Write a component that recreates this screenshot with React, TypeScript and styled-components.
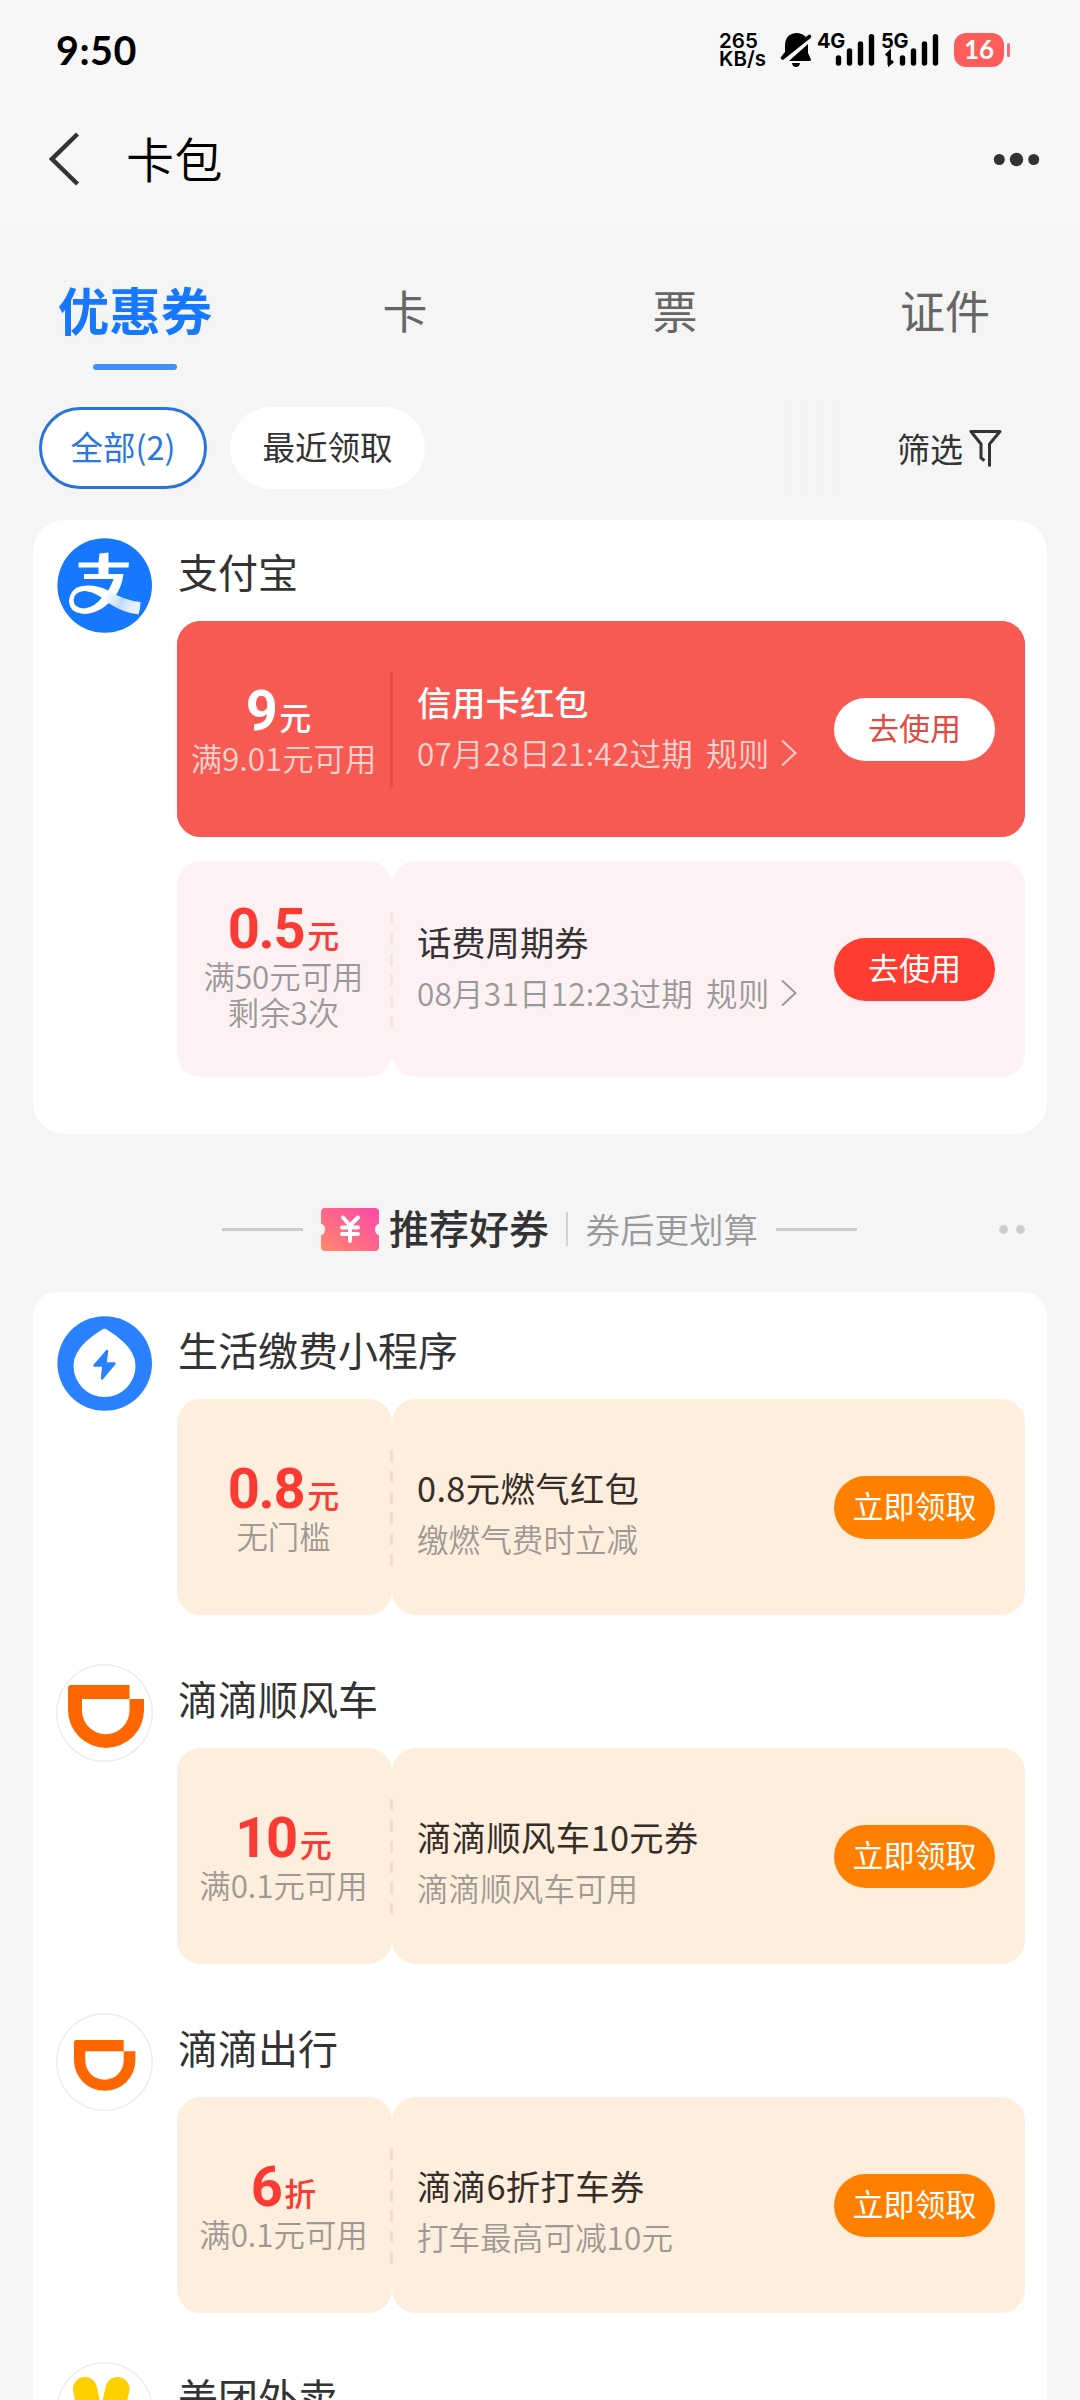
import React from 'react';
import styled, { createGlobalStyle } from 'styled-components';

const cjk = '"Noto Sans CJK SC", "Noto Sans", sans-serif';

const GlobalStyle = createGlobalStyle`
  *, *::before, *::after { box-sizing: border-box; }
  body { margin: 0; background: #f5f5f5; font-family: ${cjk}; }
  button { font-family: inherit; border: 0; padding: 0; margin: 0; }
`;

const Page = styled.div`
  width: 1080px;
  height: 2400px;
  overflow: hidden;
  background: #f5f5f5;
  color: #333;
`;

const Header = styled.header`
  height: 230px;
  background: #f7f7f7;
`;

const StatusBar = styled.div`
  height: 100px;
  display: flex;
  align-items: center;
  padding: 0 70px 0 56px;
`;

const Clock = styled.div`
  font: 700 39.5px/40px Lato, sans-serif;
  letter-spacing: 0.5px;
  color: #000;
  flex: 1;
`;

const NetSpeed = styled.div`
  width: 62px;
  font: 600 20.5px/18.5px Inter, sans-serif;
  color: #000;
`;

const StatusIcon = styled.svg<{ $gap: number }>`
  display: block;
  flex: none;
  overflow: visible;
  margin-right: ${(p) => p.$gap}px;
`;

const Battery = styled.div`
  display: flex;
  align-items: center;
  gap: 3px;
`;

const BatteryBody = styled.div`
  width: 50px;
  height: 34px;
  border-radius: 12px;
  background: #ff5c5c;
  color: #fff;
  text-align: center;
  font: 700 26px/33px Lato, sans-serif;
`;

const BatteryCap = styled.div`
  width: 3px;
  height: 14px;
  border-radius: 2px;
  background: #f0707a;
`;

const NavBar = styled.nav`
  height: 118px;
  display: flex;
  align-items: center;
  padding: 0 40px 0 48px;
`;

const NavTitle = styled.h1`
  margin: -4px auto 0 46px;
  font-size: 48px;
  font-weight: 350;
  line-height: 64px;
  letter-spacing: 0.5px;
  color: #000;
`;

const Tabs = styled.div`
  display: grid;
  grid-template-columns: repeat(4, 1fr);
  height: 140px;
  padding-top: 47px;
`;

const Tab = styled.div<{ $active?: boolean }>`
  display: flex;
  flex-direction: column;
  align-items: center;
  gap: 23px;
  line-height: ${(p) => (p.$active ? 64 : 66)}px;
  font-size: ${(p) => (p.$active ? 51.5 : 45)}px;
  font-weight: ${(p) => (p.$active ? 700 : 400)};
  color: ${(p) => (p.$active ? '#1677ff' : '#666')};
`;

const TabLine = styled.div`
  width: 84px;
  height: 6px;
  border-radius: 3px;
  background: #4590f8;
`;

const Filters = styled.div`
  display: flex;
  align-items: center;
  height: 82px;
  margin-top: 37px;
  padding: 0 78px 0 39px;
`;

const Chip = styled.div<{ $active?: boolean }>`
  width: ${(p) => (p.$active ? 168 : 195)}px;
  height: 82px;
  margin-right: 23px;
  border-radius: 41px;
  border: ${(p) => (p.$active ? '3px solid #2a73dd' : '0 solid transparent')};
  background: #fff;
  color: ${(p) => (p.$active ? '#2a76e2' : '#333')};
  font-size: 32.5px;
  line-height: ${(p) => (p.$active ? 72 : 78)}px;
  text-align: center;
  white-space: nowrap;
`;

const FadeStripes = styled.div`
  width: 55px;
  height: 82px;
  margin-left: auto;
  background: repeating-linear-gradient(90deg, #f3f3f3 0 8px, #f6f6f6 8px 15px);
  opacity: 0.6;
`;

const FilterButton = styled.div`
  display: flex;
  align-items: center;
  gap: 6px;
  margin-left: 57px;
  font-size: 33px;
  line-height: 78px;
  color: #333;
`;

const Card = styled.section<{ $top: number; $radius: number }>`
  width: 1014px;
  margin: 0 auto;
  padding: ${(p) => p.$top}px 22px 0 23px;
  border-radius: ${(p) => p.$radius}px;
  background: #fff;
`;

const WalletCard = styled(Card)`
  margin-top: 31px;
  height: 614px;
`;

const Merchant = styled.div`
  display: flex;
  gap: 24px;
  padding-bottom: 49px;
`;

const Avatar = styled.div<{ $ring?: boolean }>`
  flex: none;
  width: 97px;
  height: 98px;
  border-radius: 50%;
  box-shadow: ${(p) => (p.$ring ? 'inset 0 0 0 1.5px #ececee' : 'none')};
  svg { display: block; }
`;

const MerchantBody = styled.div`
  width: 848px;
`;

const MerchantName = styled.h2`
  margin: 0;
  height: 84px;
  padding-left: 1px;
  font-size: 40px;
  font-weight: 400;
  line-height: 68px;
  color: #333;
`;

const CouponList = styled.div`
  display: flex;
  flex-direction: column;
  gap: 24px;
`;

type Tone = 'red' | 'pink' | 'cream';

const tones = {
  red: { bg: '#f75a53', main: '#fff', title: '#fff', sub: '#ffd3cd', btn: '#fff', btnText: '#df4a42' },
  pink: { bg: '#fef1f3', main: '#fb3a33', title: '#333', sub: '#999', btn: '#fe3b2f', btnText: '#fff' },
  cream: { bg: '#feeedd', main: '#fb3a33', title: '#352d28', sub: '#9f9994', btn: '#ff8000', btnText: '#fff' },
};

const Coupon = styled.div<{ $tone: Tone }>`
  display: flex;
  width: 848px;
  height: 216px;
  border-radius: 24px;
  background: ${(p) => (p.$tone === 'red' ? tones.red.bg : 'transparent')};
`;

const Stub = styled.div<{ $tone: Tone; $double: boolean }>`
  position: relative;
  width: 215px;
  padding-top: ${(p) => (p.$double ? 40 : 62)}px;
  border-radius: 24px;
  background: ${(p) => tones[p.$tone].bg};
  text-align: center;
`;

const Perforation = styled.div<{ $tone: Tone }>`
  position: absolute;
  right: -1px;
  top: 51px;
  width: 3px;
  height: 116px;
  background: ${(p) =>
    p.$tone === 'red'
      ? '#ea4c45'
      : `repeating-linear-gradient(180deg, ${p.$tone === 'pink' ? '#fde0e3' : '#fbd8cd'} 0 12px, transparent 12px 20.8px)`};
`;

const Amount = styled.div<{ $tone: Tone }>`
  display: flex;
  justify-content: center;
  align-items: baseline;
  gap: 3px;
  height: 50px;
  padding-right: ${(p) => (p.$tone === 'red' ? 12 : 2)}px;
  line-height: 56px;
  color: ${(p) => tones[p.$tone].main};
`;

const Value = styled.span`
  font-family: Roboto, sans-serif;
  font-size: 56px;
  font-weight: 700;
  letter-spacing: -1.4px;
`;

const Unit = styled.span`
  font-size: 32px;
  font-weight: 500;
`;

const Conditions = styled.div<{ $tone: Tone }>`
  margin-top: 7px;
  padding-right: 2px;
  font-size: 31.4px;
  font-weight: 350;
  line-height: 36px;
  white-space: nowrap;
  color: ${(p) => tones[p.$tone].sub};
`;

const Detail = styled.div<{ $tone: Tone }>`
  flex: 1;
  display: flex;
  align-items: center;
  padding: 0 30px 0 25px;
  border-radius: 24px;
  background: ${(p) => tones[p.$tone].bg};
`;

const DetailText = styled.div<{ $tone: Tone }>`
  flex: 1;
  align-self: flex-start;
  padding-top: ${(p) => (p.$tone === 'cream' ? 66 : 58)}px;
  white-space: nowrap;
`;

const CouponTitle = styled.div<{ $tone: Tone }>`
  font-size: 34.3px;
  font-weight: ${(p) => (p.$tone === 'red' ? 500 : 400)};
  line-height: 44px;
  letter-spacing: ${(p) => (p.$tone === 'cream' ? 0.4 : 0)}px;
  color: ${(p) => tones[p.$tone].title};
`;

const CouponSub = styled.div<{ $tone: Tone }>`
  display: flex;
  align-items: center;
  margin-top: 9px;
  font-size: 31.5px;
  font-weight: 350;
  line-height: 40px;
  letter-spacing: ${(p) => (p.$tone === 'cream' ? 0.1 : 0.25)}px;
  color: ${(p) => tones[p.$tone].sub};
  svg { margin: 2px 0 0 10px; }
`;

const Rules = styled.span`
  margin-left: 13px;
`;

const Action = styled.button<{ $tone: Tone }>`
  width: 161px;
  height: 63px;
  border-radius: 32px;
  background: ${(p) => tones[p.$tone].btn};
  color: ${(p) => tones[p.$tone].btnText};
  font-size: 31px;
  line-height: 58px;
  padding-bottom: 5px;
  white-space: nowrap;
`;

const SectionHeader = styled.div`
  display: flex;
  align-items: center;
  height: 158px;
  padding: 32px 54px 0 222px;
`;

const Rule = styled.div`
  width: 81px;
  height: 3px;
  background: #cbcbcb;
`;

const TicketIcon = styled.svg`
  display: block;
  margin: 0 10px 0 18px;
`;

const SectionTitle = styled.div`
  font-size: 40px;
  font-weight: 500;
  line-height: 44px;
  margin-bottom: 4px;
  color: #333;
`;

const SectionDivider = styled.div`
  width: 1.5px;
  height: 34px;
  margin: 0 18px 0 17px;
  background: #d4d4d4;
`;

const SectionNote = styled.div`
  font-size: 34.5px;
  font-weight: 350;
  line-height: 44px;
  margin: 0 18px 3px 0;
  color: #999;
`;

const PagerDots = styled.svg`
  display: block;
  margin-left: auto;
`;

const Signal = ({ label, arrow, gap }: { label: string; arrow?: boolean; gap: number }) => (
  <StatusIcon $gap={gap} width="57" height="36" viewBox="0 0 57 36">
    <text x="-1" y="16" fontFamily="Inter, sans-serif" fontWeight="700" fontSize="20" letterSpacing="-0.3">{label}</text>
    {arrow && <path d="M5 23.5L8.5 20V32L12 29M8 21V33" stroke="#000" strokeWidth="3" fill="none" transform="translate(-1 0)" />}
    <g stroke="#000" strokeWidth="5.4" strokeLinecap="round">
      <path d="M20.5 26V31M31.5 19V31M42.5 12V31M53.5 4.7V31" />
    </g>
  </StatusIcon>
);

const AlipayLogo = () => (
  <svg width="97" height="97" viewBox="0 0 97 97">
    <defs>
      <linearGradient id="tail" x1="0" y1="0" x2="1" y2="0.3">
        <stop offset="0.5" stopColor="#fff" />
        <stop offset="0.8" stopColor="#c3dbff" />
        <stop offset="1" stopColor="#e6f0ff" />
      </linearGradient>
    </defs>
    <circle cx="48.7" cy="48.5" r="47.3" fill="#1677ff" />
    <path d="M43.500 16.500L52.500 15.500V25.500H73L72.500 30.500H52.500V37H67.500Q65.500 52 58 60.500Q46 75.500 29 77Q13 76 13 63.500Q15 50 27 49Q38 48 50 54L57.500 42H28V37H42.500V30.500H22.500V25.500H42.500Z" fill="#fff" />
    <path d="M28 42H57.500Q55.500 48 52 54Q40 47 28 47Z" fill="#1677ff" />
    <path d="M47.500 58.500Q37 54 28 54Q18 55 17.500 63Q18 71 28 71.500Q39 70.500 47.500 58.500Z" fill="#1677ff" />
    <path d="M20 52Q32 45 49 52Q68 63.500 84.500 65Q84.500 72 82.500 77.500Q68 76 54 67Q42 56 30 54Z" fill="url(#tail)" />
  </svg>
);

const UtilityLogo = () => (
  <svg width="97" height="97" viewBox="0 0 97 97">
    <circle cx="48.700" cy="48.500" r="47.300" fill="#2a81ff" />
    <path d="M45.500 15Q48.500 12.500 51.500 15Q60 20 67 26.500Q79.500 38 79.500 51A31 31 0 0 1 17.500 51Q17.500 38 30 26.500Q37 20 45.500 15Z" fill="#fff" />
    <path d="M51 36L38.500 50.500H47.500L46 63.500L58.500 48.500H49.500Z" fill="#2a81ff" stroke="#2a81ff" strokeWidth="2.500" strokeLinejoin="round" />
  </svg>
);

const DidiLogo = ({ small }: { small?: boolean }) => (
  <svg width="97" height="97" viewBox="0 0 97 97">
    <path
      transform={small ? 'translate(8.3 10) scale(0.808)' : undefined}
      fill="#ff6600"
      fillRule="evenodd"
      d="M12 24Q12 21 15 21H73.500V35H88V46A38 38 0 0 1 12 46ZM26 35H73.500V46.500A23.750 23.750 0 0 1 26 46.500Z"
    />
  </svg>
);

const MeituanLogo = () => (
  <svg width="97" height="97" viewBox="0 0 97 97">
    <g stroke="#ffd000" strokeWidth="24" strokeLinecap="round">
      <path d="M29 27L36 60M61.500 27L54 60" />
    </g>
  </svg>
);

const Chevron = ({ color }: { color: string }) => (
  <svg width="18" height="28" viewBox="0 0 18 28">
    <path d="M2 1.500L15.500 14L2 26.500" fill="none" stroke={color} strokeWidth="2" />
  </svg>
);

interface CouponData {
  tone: Tone;
  value: string;
  unit: string;
  conditions: string[];
  title: string;
  sub: string;
  rules?: boolean;
  action: string;
}

interface MerchantData {
  name: string;
  logo: React.ReactNode;
  ring?: boolean;
  coupons: CouponData[];
}

const wallet: MerchantData = {
  name: '支付宝',
  logo: <AlipayLogo />,
  coupons: [
    { tone: 'red', value: '9', unit: '元', conditions: ['满9.01元可用'], title: '信用卡红包', sub: '07月28日21:42过期', rules: true, action: '去使用' },
    { tone: 'pink', value: '0.5', unit: '元', conditions: ['满50元可用', '剩余3次'], title: '话费周期券', sub: '08月31日12:23过期', rules: true, action: '去使用' },
  ],
};

const recommended: MerchantData[] = [
  {
    name: '生活缴费小程序',
    logo: <UtilityLogo />,
    coupons: [{ tone: 'cream', value: '0.8', unit: '元', conditions: ['无门槛'], title: '0.8元燃气红包', sub: '缴燃气费时立减', action: '立即领取' }],
  },
  {
    name: '滴滴顺风车',
    logo: <DidiLogo />,
    ring: true,
    coupons: [{ tone: 'cream', value: '10', unit: '元', conditions: ['满0.1元可用'], title: '滴滴顺风车10元券', sub: '滴滴顺风车可用', action: '立即领取' }],
  },
  {
    name: '滴滴出行',
    logo: <DidiLogo small />,
    ring: true,
    coupons: [{ tone: 'cream', value: '6', unit: '折', conditions: ['满0.1元可用'], title: '滴滴6折打车券', sub: '打车最高可减10元', action: '立即领取' }],
  },
  { name: '美团外卖', logo: <MeituanLogo />, ring: true, coupons: [] },
];

const CouponCard = ({ data }: { data: CouponData }) => (
  <Coupon $tone={data.tone}>
    <Stub $tone={data.tone} $double={data.conditions.length > 1}>
      <Amount $tone={data.tone}>
        <Value>{data.value}</Value>
        <Unit>{data.unit}</Unit>
      </Amount>
      <Conditions $tone={data.tone}>
        {data.conditions.map((c) => (
          <div key={c}>{c}</div>
        ))}
      </Conditions>
      <Perforation $tone={data.tone} />
    </Stub>
    <Detail $tone={data.tone}>
      <DetailText $tone={data.tone}>
        <CouponTitle $tone={data.tone}>{data.title}</CouponTitle>
        <CouponSub $tone={data.tone}>
          {data.sub}
          {data.rules && (
            <>
              <Rules>规则</Rules>
              <Chevron color={tones[data.tone].sub} />
            </>
          )}
        </CouponSub>
      </DetailText>
      <Action $tone={data.tone}>{data.action}</Action>
    </Detail>
  </Coupon>
);

const MerchantRow = ({ data }: { data: MerchantData }) => (
  <Merchant>
    <Avatar $ring={data.ring}>{data.logo}</Avatar>
    <MerchantBody>
      <MerchantName>{data.name}</MerchantName>
      <CouponList>
        {data.coupons.map((c) => (
          <CouponCard key={c.title} data={c} />
        ))}
      </CouponList>
    </MerchantBody>
  </Merchant>
);

export default function App() {
  return (
    <>
      <GlobalStyle />
      <Page>
        <Header>
          <StatusBar>
            <Clock>9:50</Clock>
            <NetSpeed>
              265
              <br />
              KB/s
            </NetSpeed>
            <StatusIcon $gap={6} width="31" height="36" viewBox="0 0 31 36">
              <path d="M4 20V14Q4 2 15 1Q21 1 25 5L5 23.500L1 26Q0 24 4 20ZM27 12V21L30 27.500Q30 29 28 29H8ZM11 31H19Q18.500 35 15 35Q11.500 35 11 31Z" fill="#000" />
              <path d="M1.500 26L28.500 4.500" stroke="#000" strokeWidth="3.600" strokeLinecap="round" />
            </StatusIcon>
            <Signal label="4G" gap={7} />
            <Signal label="5G" arrow gap={15} />
            <Battery>
              <BatteryBody>16</BatteryBody>
              <BatteryCap />
            </Battery>
          </StatusBar>
          <NavBar>
            <svg width="32" height="54" viewBox="0 0 32 54">
              <path d="M29.500 2L4 27L29.500 52" fill="none" stroke="#333" strokeWidth="4.500" />
            </svg>
            <NavTitle>卡包</NavTitle>
            <svg width="48" height="16" viewBox="0 0 48 16">
              <g fill="#333">
                <circle cx="7.300" cy="8.500" r="5.500" />
                <circle cx="24.500" cy="8.500" r="6.700" />
                <circle cx="41.700" cy="8.500" r="5.500" />
              </g>
            </svg>
          </NavBar>
        </Header>
        <Tabs>
          <Tab $active>
            优惠券
            <TabLine />
          </Tab>
          <Tab>卡</Tab>
          <Tab>票</Tab>
          <Tab>证件</Tab>
        </Tabs>
        <Filters>
          <Chip $active>全部(2)</Chip>
          <Chip>最近领取</Chip>
          <FadeStripes />
          <FilterButton>
            筛选
            <svg width="33" height="38" viewBox="0 0 33 38">
              <path d="M15.500 31.500L12 29V15L2 2.500H31L20.500 15V37.500" fill="none" stroke="#333" strokeWidth="3" strokeLinejoin="round" />
            </svg>
          </FilterButton>
        </Filters>
        <WalletCard $top={17} $radius={32}>
          <MerchantRow data={wallet} />
        </WalletCard>
        <SectionHeader>
          <Rule />
          <TicketIcon width="58" height="43" viewBox="0 0 58 43">
            <defs>
              <linearGradient id="ticket" x1="0" y1="1" x2="1" y2="0">
                <stop offset="0" stopColor="#ff8a6a" />
                <stop offset="0.45" stopColor="#ff6a86" />
                <stop offset="1" stopColor="#fb48ac" />
              </linearGradient>
            </defs>
            <path d="M4 0H54Q58 0 58 4V15.500A6.500 6.500 0 0 0 58 27.500V39Q58 43 54 43H4Q0 43 0 39V27.500A6.500 6.500 0 0 0 0 15.500V4Q0 0 4 0Z" fill="url(#ticket)" />
            <path d="M22 9.500L29 17.500L37 9.500M21 19.500H37M21 26H37M29 18V33" fill="none" stroke="#fff" strokeWidth="4" strokeLinecap="round" />
          </TicketIcon>
          <SectionTitle>推荐好券</SectionTitle>
          <SectionDivider />
          <SectionNote>券后更划算</SectionNote>
          <Rule />
          <PagerDots width="30" height="12" viewBox="0 0 30 12">
            <circle cx="7.500" cy="6.500" r="4.400" fill="#ccc" />
            <circle cx="24.500" cy="6.500" r="4.400" fill="#ccc" />
          </PagerDots>
        </SectionHeader>
        <Card $top={23} $radius={24}>
          {recommended.map((m) => (
            <MerchantRow key={m.name} data={m} />
          ))}
        </Card>
      </Page>
    </>
  );
}
